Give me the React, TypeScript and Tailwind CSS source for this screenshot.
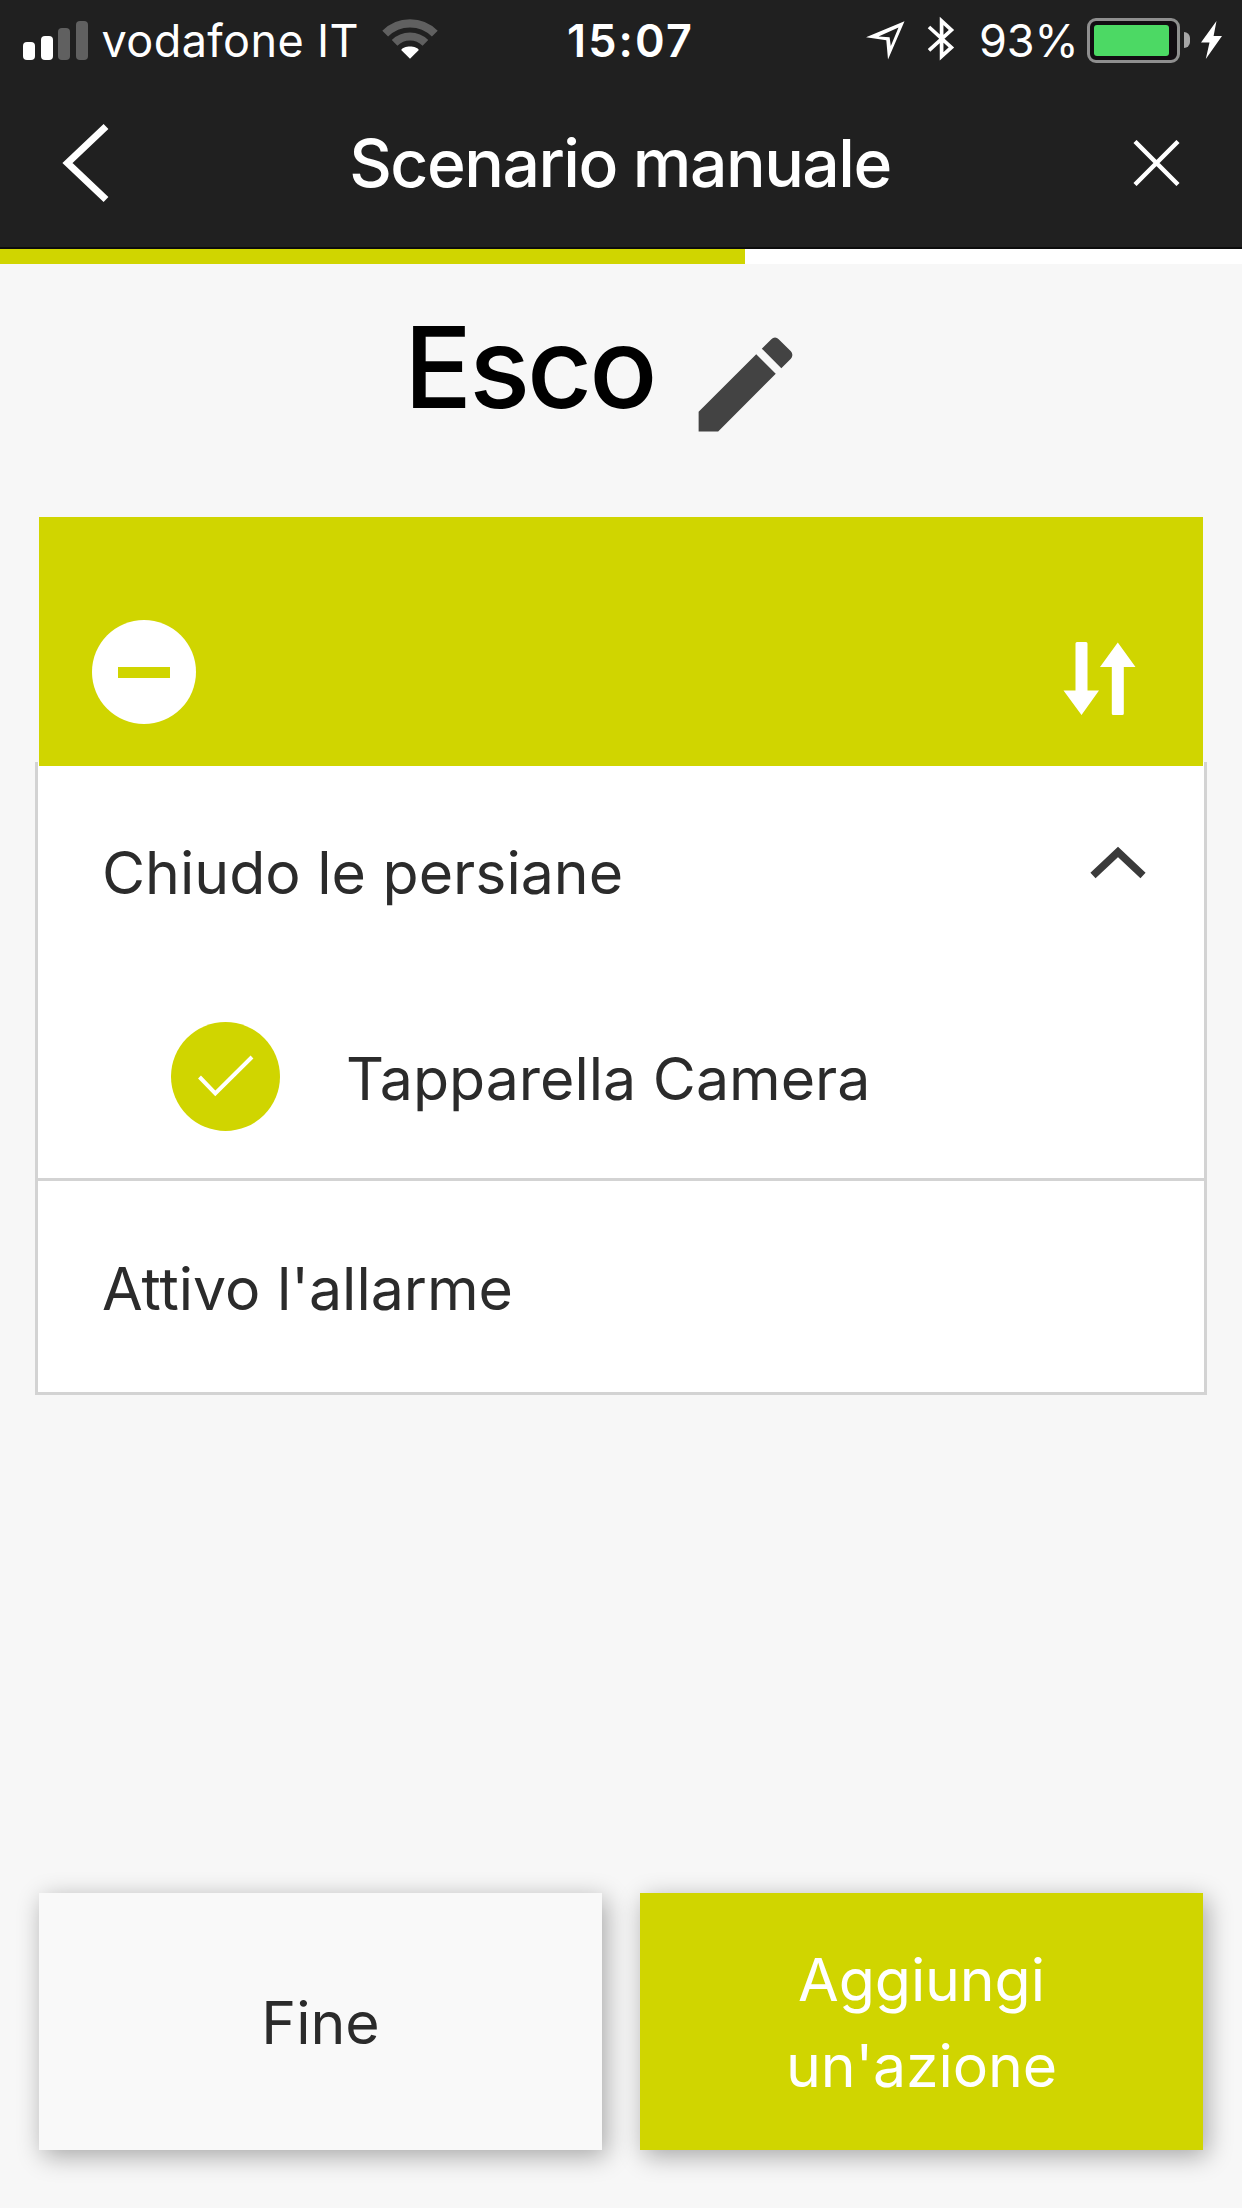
function SignalBars() {
  return (
    <div className="flex h-[39px] w-[65px] shrink-0 items-end justify-between">
      <span className="h-[18px] w-3 rounded-[4px] bg-white" />
      <span className="h-6 w-3 rounded-[4px] bg-white" />
      <span className="h-8 w-3 rounded-[4px] bg-[#606060]" />
      <span className="h-[39px] w-3 rounded-[4px] bg-[#606060]" />
    </div>
  );
}

function WifiIcon() {
  return (
    <svg className="h-10 w-14 shrink-0" viewBox="0 0 56 40" fill="none">
      <path d="M3.2 14.6A35 35 0 0 1 52.8 14.6" stroke="#606060" strokeWidth="8.2" />
      <path d="M12.6 23.8A21.8 21.8 0 0 1 43.4 23.8" stroke="#606060" strokeWidth="8" />
      <path d="M28 39.7L19.2 31C21 26.2 35 26.2 36.8 31Z" fill="#fff" />
    </svg>
  );
}

function LocationIcon() {
  return (
    <svg className="h-10 w-[41px] shrink-0" viewBox="0 0 41 40" fill="#fff">
      <path fillRule="evenodd" d="M2 17.3L40.5 1.2L24 39.5L22.3 20.3ZM14.5 16.4L25.6 17.2L26.8 26L34.5 7.6Z" />
    </svg>
  );
}

function BluetoothIcon() {
  return (
    <svg className="h-12 w-7 shrink-0" viewBox="0 0 28 48" fill="none" stroke="#fff" strokeWidth="3.7">
      <path d="M2 13L24.4 33.4L14.6 42.4V7L24.4 16L2 36.4" strokeMiterlimit="10" />
    </svg>
  );
}

function Battery() {
  return (
    <div className="flex shrink-0 items-center">
      <div className="h-[45px] w-[93px] rounded-[9px] border-[3px] border-[#8f8f8f] bg-[#120d12] p-1">
        <div className="h-full w-[75px] rounded-[3px] bg-[#4cd964]" />
      </div>
      <div className="ml-1 h-4 w-1.5 rounded-r-full bg-[#a6a6a6]" />
    </div>
  );
}

function StatusBar() {
  return (
    <div className="flex h-20 items-center text-[45px] leading-none whitespace-nowrap">
      <div className="flex w-[567px] items-center pl-[23px]">
        <SignalBars />
        <span className="ml-[13.5px] w-[256px] tracking-[0.4px]">vodafone IT</span>
        <span className="ml-[24px] -mt-0.5">
          <WifiIcon />
        </span>
      </div>
      <span className="w-[297px] font-semibold tracking-[2.1px]">15:07</span>
      <LocationIcon />
      <span className="ml-[22px] -mt-1">
        <BluetoothIcon />
      </span>
      <span className="ml-[24px] w-[108px] tracking-[-0.1px]">93%</span>
      <Battery />
      <svg className="ml-[11px] h-[38px] w-[21px] shrink-0" viewBox="0 0 21 38" fill="#fff">
        <path d="M15.5 0L0 21.5H8.5L4.8 38L21 15H12.6Z" />
      </svg>
    </div>
  );
}

function NavBar() {
  return (
    <div className="flex h-[166px] items-center justify-between pr-[62px] pl-[61px]">
      <svg className="h-20 w-12" viewBox="0 0 48 80" fill="none" stroke="#fff" strokeWidth="7">
        <path d="M45 3.5L6.5 40L45 76.5" />
      </svg>
      <h1 className="-ml-[2px] text-[66px] leading-none font-medium tracking-[-1.5px]">Scenario manuale</h1>
      <svg className="h-[46px] w-[47px]" viewBox="0 0 46 46" fill="none" stroke="#fff" strokeWidth="4.4">
        <path d="M1.5 1.5L44.5 44.5M44.5 1.5L1.5 44.5" />
      </svg>
    </div>
  );
}

function PencilIcon() {
  return (
    <svg className="h-[125px] w-[125px]" viewBox="0 0 24 24" fill="#434343">
      <path d="M3 17.25V21h3.75L17.81 9.94l-3.75-3.75L3 17.25zM20.71 7.04a1 1 0 0 0 0-1.41l-2.34-2.34a1 1 0 0 0-1.41 0l-1.83 1.83 3.75 3.75 1.83-1.83z" />
    </svg>
  );
}

function ActionsCard() {
  return (
    <section className="mx-[35px] flex flex-col">
      <div className="z-10 mx-1 flex h-[249px] items-start justify-between bg-[#d0d500] pt-[103px] pr-[67px] pl-[53px]">
        <button className="flex size-[104px] items-center justify-center rounded-full bg-white">
          <span className="h-[11px] w-[52px] bg-[#d0d500]" />
        </button>
        <svg className="mt-[22px] h-[74px] w-[73px]" viewBox="0 0 73 74" fill="#fff">
          <path d="M12.5 1.5Q12.5 0 14 0H23Q24.5 0 24.5 1.5V48.5H36L18.5 73L0.5 48.5H12.5Z" />
          <path d="M54.8 0.5L72.5 25H60.8V71.5Q60.8 73 59.3 73H50.3Q48.8 73 48.8 71.5V25H37Z" />
        </svg>
      </div>
      <div className="-mt-1 border-x-[3px] border-b-[3px] border-[#d3d3d3] bg-white text-[59px] leading-none text-[#2b2b2b]">
        <div className="flex h-[218px] items-center justify-between pt-0.5 pr-[57px] pl-16">
          <span>Chiudo le persiane</span>
          <svg className="-mt-[18px] h-9 w-[58px]" viewBox="0 0 58 36" fill="none" stroke="#3a3a3a" strokeWidth="7.5">
            <path d="M4 30.5L29 7L54 30.5" />
          </svg>
        </div>
        <div className="flex h-[198px] items-center pl-[133px]">
          <span className="-mt-[5px] flex size-[109px] items-center justify-center rounded-full bg-[#d0d500]">
            <svg className="h-[44px] w-[58px]" viewBox="0 0 58 44" fill="none" stroke="#fff" strokeWidth="4">
              <path d="M2.5 22L18.3 38.5L55 2" />
            </svg>
          </span>
          <span className="-mt-0.5 ml-[66px]">Tapparella Camera</span>
        </div>
        <div className="flex h-[214px] items-center border-t-[3px] border-[#d3d3d3] pt-[3px] pl-16">
          <span>Attivo l'allarme</span>
        </div>
      </div>
    </section>
  );
}

export default function App() {
  return (
    <div className="flex h-[2208px] w-[1242px] flex-col overflow-hidden bg-[#f7f7f7] font-['Inter',sans-serif]">
      <header className="h-[249px] border-b-2 border-[#0c0c0c] bg-[#202020] text-white">
        <StatusBar />
        <NavBar />
      </header>
      <div className="h-[15px] bg-white">
        <div className="h-full w-[745px] bg-[#d0d500]" />
      </div>
      <div className="flex h-[253px] items-start pl-[404px]">
        <h2 className="mt-[47px] w-[279px] text-[113px] leading-[113px] font-medium tracking-[-3px] text-black">Esco</h2>
        <div className="mt-[58px]">
          <PencilIcon />
        </div>
      </div>
      <ActionsCard />
      <footer className="mx-[39px] mt-auto mb-[58px] grid h-[257px] grid-cols-2 gap-[38px] text-[59px]">
        <button className="bg-[#f9f9f9] pt-[3px] text-[#2b2b2b] shadow-[4px_6px_24px_rgba(0,0,0,0.33)]">Fine</button>
        <button className="bg-[#d0d500] pt-[3px] leading-[86px] tracking-[-0.1px] text-white shadow-[4px_6px_24px_rgba(0,0,0,0.33)]">
          Aggiungi
          <br />
          un'azione
        </button>
      </footer>
    </div>
  );
}
